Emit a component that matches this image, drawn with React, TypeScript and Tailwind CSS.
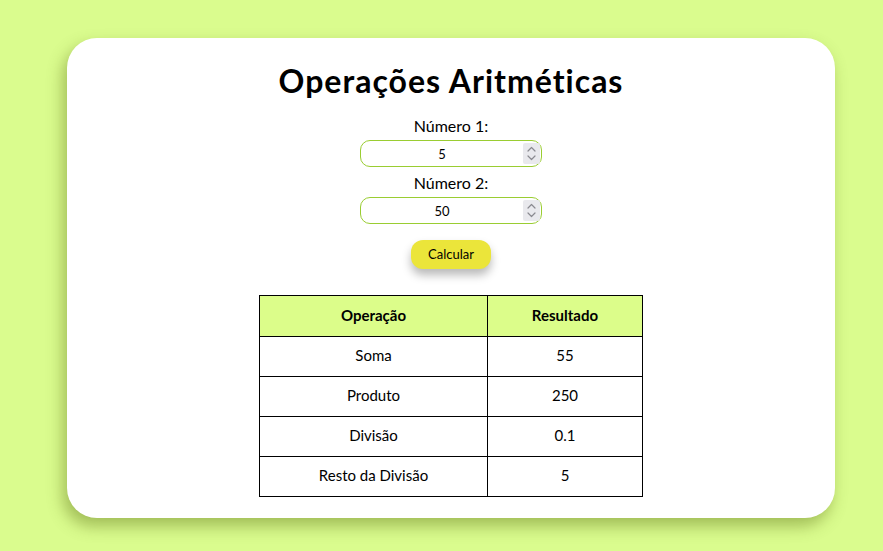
import React from "react";

function Spin() {
  return (
    <div className="pointer-events-none absolute right-[2px] top-[3px] w-[17px] h-[21px] bg-[#e9e9ed] rounded-[2px] flex items-center justify-center">
      <svg width="9" height="15" viewBox="0 0 9 15" fill="none" stroke="#8a8a90" strokeWidth="1.2" strokeLinecap="round" strokeLinejoin="round">
        <path d="M1 5 L4.5 1.5 L8 5" />
        <path d="M1 10 L4.5 13.5 L8 10" />
      </svg>
    </div>
  );
}

export default function App() {
  const rows = [
    ["Soma", "55"],
    ["Produto", "250"],
    ["Divisão", "0.1"],
    ["Resto da Divisão", "5"],
  ];
  const inputCls =
    "w-[182px] h-[27px] border border-[#9acd32] rounded-[10px] text-center text-[13px] text-black outline-none pl-[4px] pr-[22px] [appearance:textfield] [&::-webkit-inner-spin-button]:appearance-none";
  return (
    <div
      className="w-[883px] h-[551px] bg-[#dafc8e] pt-[38px] pl-[67px] overflow-hidden"
      style={{ fontFamily: "Lato, 'Noto Sans', sans-serif" }}
    >
      <div className="w-[768px] h-[480px] bg-white rounded-[30px] shadow-[-4px_8px_16px_rgba(90,110,20,0.45)] flex flex-col items-center pt-[21px]">
        <h1 className="text-[32px] font-bold text-black leading-[44px] tracking-[1px]">Operações Aritméticas</h1>
        <label className="mt-[13px] text-[16px] leading-[20px] text-black">Número 1:</label>
        <div className="relative mt-[4px]">
          <input type="number" defaultValue={5} className={inputCls} />
          <Spin />
        </div>
        <label className="mt-[6px] text-[16px] leading-[20px] text-black">Número 2:</label>
        <div className="relative mt-[4px]">
          <input type="number" defaultValue={50} className={inputCls} />
          <Spin />
        </div>
        <button className="mt-[16px] w-[80px] h-[29px] bg-[#ebe53a] rounded-[12px] text-[13px] text-black shadow-[0_6px_10px_rgba(0,0,0,0.28)]">
          Calcular
        </button>
        <table className="mt-[26px] w-[384px] border-collapse text-[15px] text-black">
          <thead>
            <tr className="bg-[#dcfd8a] h-[41px]">
              <th className="border border-black w-[228px] font-bold pb-[2px]">Operação</th>
              <th className="border border-black font-bold pb-[2px]">Resultado</th>
            </tr>
          </thead>
          <tbody>
            {rows.map(([a, b]) => (
              <tr key={a} className="h-[40px]">
                <td className="border border-black text-center pb-[2px]">{a}</td>
                <td className="border border-black text-center pb-[2px]">{b}</td>
              </tr>
            ))}
          </tbody>
        </table>
      </div>
    </div>
  );
}
